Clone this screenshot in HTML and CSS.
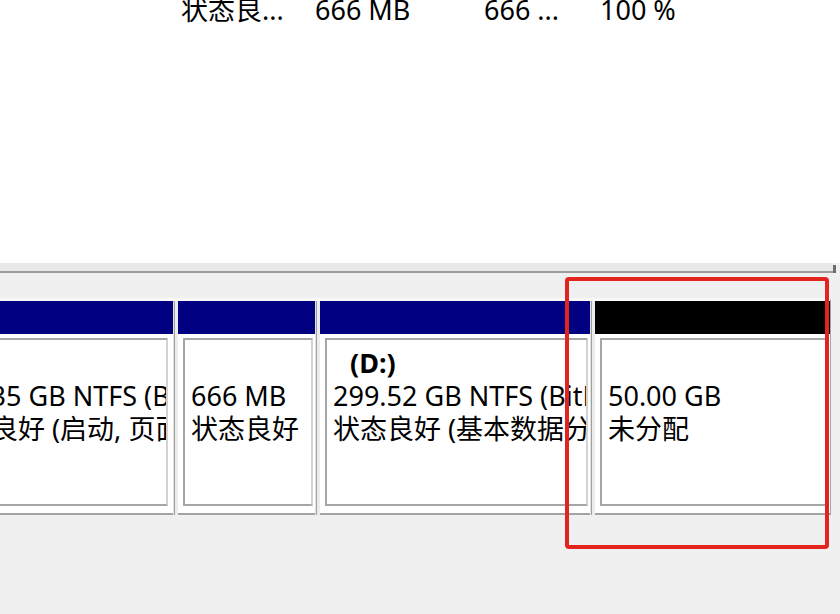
FILE: index.html
```html
<!DOCTYPE html>
<html>
<head>
  <title>磁盘管理</title>
  <meta charset="utf-8">
  <link rel="stylesheet" href="styles.css">
</head>
<body>
  <div class="list">
    <div class="row">
      <span>状态良...</span>
      <span>666 MB</span>
      <span>666 ...</span>
      <span>100 %</span>
    </div>
  </div>
  <div class="edge"></div>

  <div class="graph">
    <div class="disk">

      <div class="part p1">
        <div class="head"></div>
        <div class="body">
          <div class="frame">
            <div class="name"></div>
            <div>243.35 GB NTFS (BitLocker 已加密)</div>
            <div>状态良好 (启动, 页面文件, 故障转储, 基本数据分区)</div>
          </div>
        </div>
      </div>
      <div class="sep"></div>

      <div class="part p2">
        <div class="head"></div>
        <div class="body">
          <div class="frame">
            <div class="name"></div>
            <div>666 MB</div>
            <div>状态良好</div>
          </div>
        </div>
      </div>
      <div class="sep"></div>

      <div class="part p3">
        <div class="head"></div>
        <div class="body">
          <div class="frame">
            <div class="name">(D:)</div>
            <div>299.52 GB NTFS (BitLocker 已加密)</div>
            <div>状态良好 (基本数据分区)</div>
          </div>
        </div>
      </div>
      <div class="sep"></div>

      <div class="part p4">
        <div class="head free"></div>
        <div class="body">
          <div class="frame">
            <div class="name"></div>
            <div>50.00 GB</div>
            <div>未分配</div>
          </div>
        </div>
      </div>

    </div>
  </div>

  <div class="mark"></div>
</body>
</html>
```

FILE: styles.css
```css
body {
  margin: 0;
  width: 840px;
  height: 614px;
  overflow: hidden;
  position: relative;
  background: #f0f0f0;
  font-family: "Noto Sans", "Noto Sans CJK SC", sans-serif;
  font-size: 27px;
  color: #000;
}

.list {
  height: 263px;
  background: #fff;
  overflow: hidden;
}
.row {
  display: grid;
  grid-template-columns: 134px 169px 116px auto;
  padding-left: 181px;
  margin-top: -5px;
  line-height: 30px;
  white-space: nowrap;
}
.edge {
  height: 8px;
  background: #e9e9e9;
  border-bottom: 2px solid #9c9c9c;
  margin-right: 6px;
  position: relative;
}
.edge::after {
  content: "";
  position: absolute;
  right: -2px;
  bottom: -2px;
  width: 3px;
  height: 8px;
  background: #6e6e6e;
}

.graph {
  padding-top: 25px;
}
.disk {
  display: flex;
  height: 217px;
}
.part {
  display: flex;
  flex-direction: column;
  background: #fff;
  border-top: 3px solid #f8f8f8;
  border-bottom: 2px solid #a3a3a3;
  overflow: hidden;
}
.p1 { width: 173px; }
.p2 { width: 137px; }
.p3 { width: 270px; }
.p4 { width: 235px; border-right: 1px solid #a3a3a3; }

.head {
  height: 33px;
  flex: none;
  background: #000080;
}
.head.free {
  background: #000;
}
.body {
  flex: 1;
  padding: 4px 2px 7px 5px;
  min-height: 0;
}
.p1 .body {
  padding-right: 5px;
}
.frame {
  height: 100%;
  box-sizing: border-box;
  border: 2px solid;
  border-color: #a6a6a6 #d2d2d2 #a6a6a6 #a6a6a6;
  padding: 6px 0 0 6px;
  line-height: 33px;
  white-space: nowrap;
  overflow: hidden;
}
.p1 .frame {
  margin-left: -76px;
}
.name {
  height: 33px;
  font-weight: bold;
  padding-left: 17px;
}

.sep {
  width: 5px;
  border-top: 3px solid #f8f8f8;
  background: linear-gradient(to right, #e2e2e2 0 1px, #a0a0a0 1px 2px, #ececec 2px);
}

.mark {
  position: absolute;
  left: 565px;
  top: 277px;
  width: 264px;
  height: 272px;
  box-sizing: border-box;
  border: 4px solid #e3231e;
  border-radius: 4px;
}
```
